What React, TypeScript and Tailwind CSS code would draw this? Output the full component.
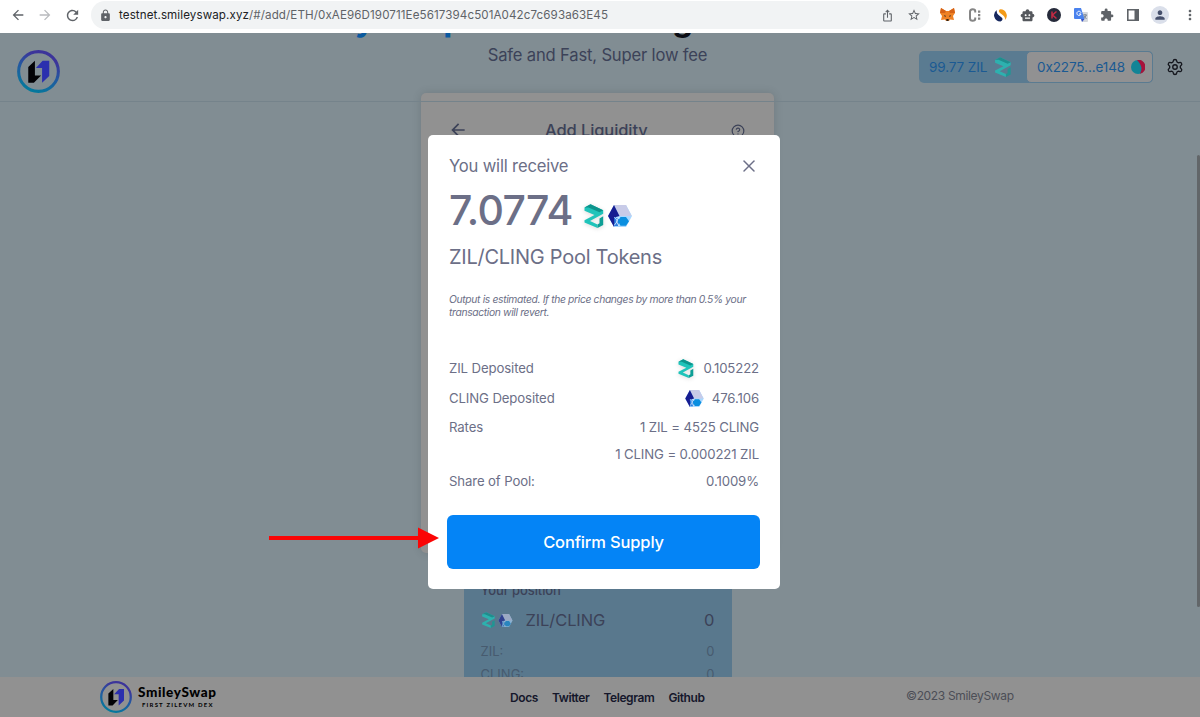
import { HelpCircle, Settings, X } from "lucide-react";
import {
  MdArrowBack,
  MdArrowForward,
  MdExtension,
  MdLock,
  MdMoreVert,
  MdOutlineStarOutline,
  MdPerson,
  MdRefresh,
  MdSmartToy,
  MdOutlineIosShare,
} from "react-icons/md";

const FOOTER_LINKS = ["Docs", "Twitter", "Telegram", "Github"];

type IconProps = { className?: string };

function ZilIcon({ className }: IconProps) {
  return (
    <svg viewBox="0 0 19 24" className={className}>
      <path d="M0 3.5 L6 0.3 L18.7 6.3 V9.8 L5.5 17 L13 20.4 V24 L0 18.6 V16.2 L10 11 L0 6.8 Z" fill="#1fc4ba" />
      <path d="M0 3.5 L6 0.3 L18.7 6.3 L15 8.2 L4 3.4 Z" fill="#0d938c" />
      <path d="M15 14.4 L18.7 12.2 V21 L13 24 V20.4 L15 19.2 Z" fill="#0e9f96" />
    </svg>
  );
}

function ClingIcon({ className }: IconProps) {
  return (
    <svg viewBox="0 0 24 22" className={className}>
      <path d="M6 0 H18 L24 11 L18 22 H6 L0 11 Z" fill="#a9d8ff" />
      <path d="M6 0 H18 L23.5 11 H11.5 Z" fill="#c8cbe8" />
      <path d="M6 0 L11.5 11 L8 12 L6 22 L0 11 Z" fill="#161c91" />
      <path d="M6 12 L12 14.5 L10 21 H6.5 Z" fill="#2b7de0" />
      <path d="M6.5 12 L9.5 16 L6.5 20 M11 12 L8.5 16.5 L11 21" fill="none" stroke="#d5ecff" strokeWidth="0.9" />
      <path d="M12.5 12 H18 L21 16.3 L18 20.7 H12.5 L10 16.3 Z" fill="#0a8fe0" />
    </svg>
  );
}

function Logo({ className, id }: IconProps & { id: string }) {
  return (
    <svg viewBox="0 0 42 42" className={className}>
      <defs>
        <linearGradient id={id} x1="0.7" y1="0" x2="0.3" y2="1">
          <stop offset="0.15" stopColor="#3c349a" />
          <stop offset="0.5" stopColor="#2458a0" />
          <stop offset="1" stopColor="#037a9c" />
        </linearGradient>
      </defs>
      <circle cx="21" cy="21" r="19.4" fill="none" stroke={`url(#${id})`} strokeWidth="3" />
      <path d="M11 16.5 L17.5 10.5 V25 H23.5 L16.5 32 H11 Z" fill="#020206" />
      <path d="M18.5 17.5 L25 10.5 H31.5 V25.5 L24.5 32 V17.5 Z" fill="#2b2fae" />
    </svg>
  );
}

function BrowserBar() {
  return (
    <div className="flex h-[33px] shrink-0 items-center bg-white pb-[3px] text-[#5f6368]">
      <div className="flex w-[91px] items-center gap-[11px] pl-[10px]">
        <MdArrowBack className="size-4" />
        <MdArrowForward className="size-4 text-[#b9bbbe]" />
        <MdRefresh className="size-[17px]" />
      </div>
      <div className="flex h-7 w-[838px] items-center rounded-full bg-[#f1f3f4] pr-2 pl-2">
        <MdLock className="size-[13px] text-[#5f6368]" />
        <span className="mt-px ml-[7px] text-[11.6px] tracking-[0.1px] text-[#5f6368]">
          <span className="text-[#202124]">testnet.smileyswap.xyz</span>
          /#/add/ETH/0xAE96D190711Ee5617394c501A042c7c693a63E45
        </span>
        <MdOutlineIosShare className="mr-[13px] ml-auto size-[13px]" />
        <MdOutlineStarOutline className="size-[14px]" />
      </div>
      <div className="flex flex-1 items-center justify-between pr-[2px] pl-[11px]">
        <svg viewBox="0 0 15 14" className="h-[14px] w-[15px]">
          <path d="M1 0 L6 3 H9 L14 0 L15 5 L13 8 L14 12 L10 11.5 L9 13 H6 L5 11.5 L1 12 L2 8 L0 5 Z" fill="#ee8124" />
          <path d="M1 0 L6 3 L5 5 L0 5 Z M14 0 L9 3 L10 5 L15 5 Z" fill="#d66216" />
          <path d="M4 7 L6 8 L5 9 Z M11 7 L9 8 L10 9 Z M6.3 11 H8.7 L8.5 13 H6.5 Z" fill="#2b2621" />
        </svg>
        <svg viewBox="0 0 14 14" className="size-[14px]">
          <path d="M7.2 4.5 V3 Q7.2 1.2 4.7 1.2 Q2 1.2 2 3.8 V10.2 Q2 12.8 4.7 12.8 Q7.2 12.8 7.2 11 V9.5" fill="none" stroke="#858585" strokeWidth="2" />
          <path d="M10 2.5 H12.3 V4.7 H10 Z M10 6 H12.3 V8.2 H10 Z M10 9.5 H12.3 V11.7 H10 Z" fill="#858585" />
        </svg>
        <svg viewBox="0 0 13 13" className="size-[13px]">
          <path d="M3 1 A6.3 6.3 0 0 0 6.5 12.6 Q9.3 11.5 8.2 9 L4.3 5.8 Q2 3.8 3 1 Z" fill="#17285e" />
          <path d="M5.6 .4 A6.3 6.3 0 0 1 10.8 11.2 Q11.8 8.5 9 6.3 L6 4 Q3.9 2 5.6 .4 Z" fill="#f49b18" />
        </svg>
        <MdSmartToy className="size-[15px] text-[#55585d]" />
        <svg viewBox="0 0 14 14" className="size-[14px]">
          <circle cx="7" cy="7" r="7" fill="#252a3a" />
          <path d="M5 3.5 V10.5 M9.5 3.5 L5.5 7 L9.5 10.5" fill="none" stroke="#c52a43" strokeWidth="1.5" />
        </svg>
        <svg viewBox="0 0 14 14" className="size-[14px]">
          <path d="M5 4 H13 Q14 4 14 5 V13 Q14 14 13 14 H8 Z" fill="#d5d8dd" />
          <path d="M1 0 H7 L10.5 11 H1 Q0 11 0 10 V1 Q0 0 1 0 Z" fill="#4a82ee" />
          <path d="M7 4.7 A2.1 2.1 0 1 0 7 6 H5" fill="none" stroke="#fff" strokeWidth="1" />
          <path d="M9 7 H13 M11 6 V7 M12.3 7 Q11.5 9.5 9.8 10.5 M10 8 L12.5 11" fill="none" stroke="#6c7785" strokeWidth=".8" />
          <path d="M7 11 H10.5 L8 14 Z" fill="#3451c6" />
        </svg>
        <MdExtension className="size-[14px]" />
        <svg viewBox="0 0 12 12" className="size-3">
          <path d="M.8 .8 H11.2 V11.2 H.8 Z" fill="none" stroke="#5f6368" strokeWidth="1.6" />
          <path d="M7.5 1 H11 V11 H7.5 Z" fill="#5f6368" />
        </svg>
        <span className="flex size-[18px] items-center justify-center rounded-full bg-[#dadfea]">
          <MdPerson className="size-[14px] text-[#46506c]" />
        </span>
        <MdMoreVert className="size-4" />
      </div>
    </div>
  );
}

function Header() {
  return (
    <header className="absolute inset-x-0 top-0 flex h-[69px] items-center justify-between border-b border-[#75838b] pr-4 pl-[17px]">
      <Logo id="header-logo" className="mt-[9px] size-[43px]" />
      <div className="flex items-center">
        <div className="flex h-8 w-[234px] items-center rounded-[5px] bg-[#5a7b91] text-[13.5px] text-[#1b5a93]">
          <span className="pl-[10px] tracking-[-0.1px]">99.77 ZIL</span>
          <ZilIcon className="ml-[8px] h-5 w-4 opacity-75" />
          <div className="ml-auto flex h-8 w-[127px] items-center justify-between rounded-[5px] border border-[#5a7b91] bg-[#919192] pr-[7px] pl-[10px]">
            <span className="tracking-[-0.1px]">0x2275...e148</span>
            <svg viewBox="0 0 14 14" className="size-[14px]">
              <circle cx="7" cy="7" r="7" fill="#138496" />
              <path d="M6 0 A7 7 0 0 1 9 13.7 Q13 7 6 0 Z" fill="#a8123b" />
            </svg>
          </div>
        </div>
        <Settings className="ml-[13px] size-[18px] text-[#15171e]" strokeWidth={1.8} />
      </div>
    </header>
  );
}

function PositionCard() {
  return (
    <div className="mx-auto mt-[11px] h-[130px] w-[268px] bg-[#59788d] px-[17px] pt-[16px] text-[#3c4258]">
      <div className="text-[13px] leading-5 font-medium tracking-[-0.1px]">Your position</div>
      <div className="mt-[8px] flex items-center text-[16.5px] leading-6">
        <ZilIcon className="ml-px h-4 w-[13px] opacity-75" />
        <ClingIcon className="ml-[3px] h-[13px] w-[15px] opacity-60" />
        <span className="ml-[13px] tracking-[-0.1px]">ZIL/CLING</span>
        <span className="ml-auto">0</span>
      </div>
      <div className="mt-[9px] flex justify-between text-[13px] leading-5 text-[#475b6f]">
        <span>ZIL:</span>
        <span>0</span>
      </div>
      <div className="mt-[3px] flex justify-between text-[13px] leading-5 text-[#475b6f]">
        <span>CLING:</span>
        <span>0</span>
      </div>
    </div>
  );
}

function Footer() {
  return (
    <footer className="grid h-10 shrink-0 grid-cols-[410px_1fr_294px] items-center bg-[#919191]">
      <div className="flex items-center pl-[100px]">
        <Logo id="footer-logo" className="size-8" />
        <div className="ml-[6px] pb-px font-[Lato,sans-serif] text-black">
          <div className="text-[13.5px] leading-[14px] font-black tracking-[0.6px]">SmileySwap</div>
          <div className="pt-[2px] pl-[4px] text-[6px] leading-[7px] font-bold tracking-[1.2px]">FIRST ZILEVM DEX</div>
        </div>
      </div>
      <nav className="flex gap-[14px] pt-px pl-[100px] text-xs font-semibold tracking-[-0.4px] text-[#15172b]">
        {FOOTER_LINKS.map((link) => (
          <a key={link}>{link}</a>
        ))}
      </nav>
      <div className="pb-[3px] text-xs tracking-[-0.34px] text-[#4c4e56]">©2023 SmileySwap</div>
    </footer>
  );
}

type RowProps = {
  label?: string;
  value: string;
  icon?: React.ReactNode;
  className: string;
};

function Row({ label, value, icon, className }: RowProps) {
  return (
    <div className={`flex items-center ${className}`}>
      <span>{label}</span>
      <span className="ml-auto flex items-center">
        {icon}
        {value}
      </span>
    </div>
  );
}

function ConfirmModal() {
  return (
    <div className="absolute top-[135px] left-[428px] z-20 h-[454px] w-[352px] rounded-[5px] bg-white px-[20px] pt-[21px] text-[#6c6f87]">
      <div className="px-px">
        <div className="flex items-center justify-between text-[16.6px] leading-5 tracking-[-0.18px]">
          <span>You will receive</span>
          <X className="size-5" strokeWidth={1.8} />
        </div>
        <div className="mt-[10px] flex h-[50px] items-center">
          <span className="text-[41px] font-medium tracking-[-0.6px]">7.0774</span>
          <ZilIcon className="mt-[10px] ml-[11px] h-[24px] w-[20px] drop-shadow-sm" />
          <ClingIcon className="mt-[9px] ml-[4px] h-[22px] w-6" />
        </div>
        <div className="mt-[7px] text-[20px] leading-7 tracking-[-0.26px]">ZIL/CLING Pool Tokens</div>
        <p className="mt-[22px] text-[10.3px] leading-[12.5px] tracking-[-0.34px] whitespace-nowrap italic">
          Output is estimated. If the price changes by more than 0.5% your
          <br />
          transaction will revert.
        </p>
        <div className="mt-[36px] text-[13.2px] tracking-[-0.12px]">
          <Row
            className="h-[30px]"
            label="ZIL Deposited"
            value="0.105222"
            icon={<ZilIcon className="mr-[9px] h-[19px] w-4 drop-shadow-sm" />}
          />
          <Row
            className="h-[30px]"
            label="CLING Deposited"
            value="476.106"
            icon={<ClingIcon className="mr-[8px] h-[17px] w-[19px]" />}
          />
          <Row className="h-[27px]" label="Rates" value="1 ZIL = 4525 CLING" />
          <Row className="h-[27px]" value="1 CLING = 0.000221 ZIL" />
          <Row className="h-[27px]" label="Share of Pool:" value="0.1009%" />
        </div>
      </div>
      <button className="mt-[20px] -ml-px h-[54px] w-[313px] rounded-[6px] bg-[#0484f6] text-[16.5px] font-medium tracking-[-0.15px] text-white">
        Confirm Supply
      </button>
    </div>
  );
}

export default function App() {
  return (
    <div className="relative flex h-[717px] w-[1200px] flex-col overflow-hidden bg-[#818d93] font-[Inter,sans-serif]">
      <BrowserBar />
      <main className="relative min-h-0 flex-1 overflow-hidden">
        <div className="pr-[5px]">
          {/* Hero heading, scrolled almost out of view */}
          <div className="-mt-[34px] flex h-10 justify-between pr-[502px] pl-[266px] text-[33px] leading-10 font-bold">
            <span className="text-[#0b5aa0]">SmileySwap</span>
            <span className="text-[#0b0d14]">g</span>
          </div>
          <p className="mt-[4px] text-center text-[16.6px] leading-6 tracking-[-0.17px] text-[#3c4258]">
            Safe and Fast, Super low fee
          </p>
          <section className="mx-auto mt-[26px] h-[460px] w-[353px] rounded-[5px] bg-[#919191] px-[29px] pt-[27px] text-[#3c4258] shadow-[0_0_10px_#0002]">
            <div className="flex items-center">
              <MdArrowBack className="-ml-[2px] size-5" />
              <span className="ml-[77px] text-[16.5px] leading-5 font-medium tracking-[-0.1px]">Add Liquidity</span>
              <HelpCircle className="mt-px ml-auto size-[14px]" />
            </div>
          </section>
          <PositionCard />
        </div>
        <Header />
        <div className="absolute top-[122px] right-0 h-[452px] w-[3px] rounded-full bg-[#626669]" />
      </main>
      <Footer />
      <ConfirmModal />
      {/* Arrow pointing at the confirm button */}
      <svg viewBox="0 0 170 22" className="absolute top-[527px] left-[269px] z-30 h-[22px] w-[170px]">
        <path d="M0 9 H149 V0.5 L170 11 L149 21.5 V13 H0 Z" fill="#fb0505" />
      </svg>
    </div>
  );
}
